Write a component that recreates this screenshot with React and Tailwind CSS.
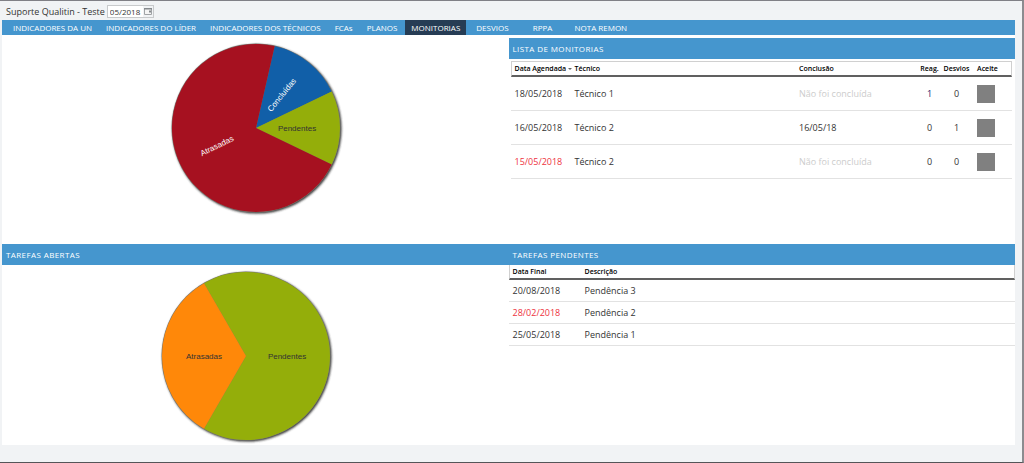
import { useState } from "react";

const tabs = [
  { label: "INDICADORES DA UN", size: "px-1.5" },
  { label: "INDICADORES DO LÍDER", size: "px-1.5" },
  { label: "INDICADORES DOS TÉCNICOS", size: "px-1.5" },
  { label: "FCAs", size: "px-1.5" },
  { label: "PLANOS", size: "px-1.5" },
  { label: "MONITORIAS", size: "px-1.5" },
  { label: "DESVIOS", size: "px-2" },
  { label: "RPPA", size: "min-w-12 px-2" },
  { label: "NOTA REMON", size: "px-1.5" },
];

const monitorias = [
  { data: "18/05/2018", tecnico: "Técnico 1", conclusao: null, reag: 1, desvios: 0, atrasada: false },
  { data: "16/05/2018", tecnico: "Técnico 2", conclusao: "16/05/18", reag: 0, desvios: 1, atrasada: false },
  { data: "15/05/2018", tecnico: "Técnico 2", conclusao: null, reag: 0, desvios: 0, atrasada: true },
];

const tarefas = [
  { data: "20/08/2018", descricao: "Pendência 3", atrasada: false },
  { data: "28/02/2018", descricao: "Pendência 2", atrasada: true },
  { data: "25/05/2018", descricao: "Pendência 1", atrasada: false },
];

const R = 84;

function point(deg) {
  const a = (deg * Math.PI) / 180;
  return `${(R * Math.sin(a)).toFixed(2)} ${(-R * Math.cos(a)).toFixed(2)}`;
}

function slicePath(from, to) {
  return `M0 0L${point(from)}A${R} ${R} 0 ${to - from > 180 ? 1 : 0} 1 ${point(to)}Z`;
}

function Pie({ title, id, slices }) {
  return (
    <svg width="176" height="176" viewBox="-87 -87 176 176" role="img" aria-label={title}>
      <defs>
        <filter id={id} x="-10%" y="-10%" width="120%" height="120%">
          <feGaussianBlur stdDeviation="0.8" />
        </filter>
      </defs>
      <circle cx="1" cy="1" r="84.5" fill="#333333" filter={`url(#${id})`} />
      <circle r="84.5" fill="#77776f" />
      {slices.map((s) => (
        <path key={s.label} d={slicePath(s.from, s.to)} fill={s.fill} />
      ))}
      {slices.map((s) => (
        <text
          key={s.label}
          transform={`translate(${s.x} ${s.y}) rotate(${s.rotate})`}
          textAnchor="middle"
          dominantBaseline="central"
          fill={s.ink}
          className="font-['Liberation_Sans',sans-serif] text-[8px]"
        >
          {s.label}
        </text>
      ))}
    </svg>
  );
}

function PanelTitle({ children }) {
  return (
    <h2 className="flex h-[21px] items-center bg-[#4596ce] px-1 text-[8px] font-normal tracking-wider text-white">
      {children}
    </h2>
  );
}

export default function App() {
  const [active, setActive] = useState("MONITORIAS");
  const [mes, setMes] = useState("05/2018");

  return (
    <div className="flex min-h-screen flex-col border-t border-r-2 border-b border-t-[#808086] border-r-[#8c8c90] border-b-[#555558] bg-[#f1f3f5] pr-[7px] pl-0.5 font-['Open_Sans',sans-serif] text-[9px] leading-3 text-[#333333]">
      <header className="flex h-[19px] items-center gap-0.5 pt-0.5 pl-1">
        <label htmlFor="mes">Suporte Qualitin - Teste</label>
        <div className="flex h-[13px] w-[47px] items-center justify-between border border-[#c8cacc] bg-white pl-0.5">
          <input
            id="mes"
            value={mes}
            onChange={(e) => setMes(e.target.value)}
            className="w-8 min-w-0 bg-transparent text-[8px] leading-[11px] outline-none"
          />
          <button type="button" aria-label="Abrir calendário" className="flex h-[11px] w-[10px] items-center justify-center bg-[#f1f3f5]">
            <svg width="8" height="7" viewBox="0 0 8 7">
              <path d="M.5.5h7v6h-7z" fill="#f5f5f5" stroke="#a0a3a6" />
              <path d="M0 0h8v1.500H0zM5 2.500h2v2H5z" fill="#85898d" />
            </svg>
          </button>
        </div>
      </header>

      <nav className="flex h-[15px] items-stretch gap-0.5 bg-[#4596ce] pl-[5px]">
        {tabs.map((t) => (
          <a
            key={t.label}
            href="#"
            aria-current={t.label === active ? "page" : undefined}
            onClick={(e) => {
              e.preventDefault();
              setActive(t.label);
            }}
            className={`flex items-center justify-center text-[8px] whitespace-nowrap text-white ${t.size} ${
              t.label === active ? "bg-[#263c54]" : ""
            }`}
          >
            {t.label}
          </a>
        ))}
      </nav>

      <main className="bg-white">
        <div className="grid grid-cols-2 pt-[3px]">
          <section className="flex h-[206px] justify-center pt-[3px] pl-[3px]">
            <Pie
              id="sombra-monitorias"
              title="Monitorias"
              slices={[
                { label: "Concluídas", from: 12.86, to: 64.29, fill: "#115fa8", ink: "#ffffff", x: 26, y: -33, rotate: -51 },
                { label: "Pendentes", from: 64.29, to: 115.71, fill: "#94ae0a", ink: "#333333", x: 41, y: 0, rotate: 0 },
                { label: "Atrasadas", from: 115.71, to: 372.86, fill: "#a61120", ink: "#ffffff", x: -39, y: 18, rotate: -26 },
              ]}
            />
          </section>
          <section>
            <PanelTitle>LISTA DE MONITORIAS</PanelTitle>
            <div className="pt-0.5 pr-[3px] pl-0.5">
              <table className="w-full table-fixed border-separate border-spacing-0 text-left">
                <colgroup>
                  <col className="w-[61px]" />
                  <col />
                  <col className="w-[120px]" />
                  <col className="w-[27px]" />
                  <col className="w-[27px]" />
                  <col className="w-[42px]" />
                </colgroup>
                <thead className="text-[7px] text-black">
                  <tr className="h-4 *:border-t *:border-b-2 *:border-t-[#d0d0d0] *:border-b-[#606060] *:p-0 *:font-semibold *:whitespace-nowrap">
                    <th className="border-l border-l-[#d0d0d0]">
                      <span className="flex items-center justify-between pl-[3px]">
                        Data Agendada
                        <svg width="4" height="2" viewBox="0 0 4 2">
                          <path d="M0 0h4L2 2z" fill="#666666" />
                        </svg>
                      </span>
                    </th>
                    <th><span className="pl-[3px]">Técnico</span></th>
                    <th><span className="pl-[3px]">Conclusão</span></th>
                    <th className="text-center">Reag.</th>
                    <th className="text-center">Desvios</th>
                    <th className="border-r border-r-[#d0d0d0]"><span className="pl-[7px]">Aceite</span></th>
                  </tr>
                </thead>
                <tbody>
                  {monitorias.map((m) => (
                    <tr key={m.data} className="h-[34px] *:border-b *:border-[#e2e2e2] *:py-0 *:whitespace-nowrap">
                      <td className={m.atrasada ? "pl-1 text-[#ee3340]" : "pl-1"}>{m.data}</td>
                      <td className="pl-[3px]">{m.tecnico}</td>
                      <td className={m.conclusao ? "pl-[3px]" : "pl-[3px] text-[#cccccc]"}>{m.conclusao ?? "Não foi concluída"}</td>
                      <td className={m.reag ? "text-center text-[#22226a]" : "text-center"}>{m.reag}</td>
                      <td className="text-center">{m.desvios}</td>
                      <td className="pl-[7px]">
                        <div className="size-[18px] bg-[#808080]" />
                      </td>
                    </tr>
                  ))}
                </tbody>
              </table>
            </div>
          </section>
        </div>

        <div className="grid grid-cols-2">
          <section className="h-[201px]">
            <PanelTitle>TAREFAS ABERTAS</PanelTitle>
            <div className="flex justify-center pt-1 pr-4">
              <Pie
                id="sombra-tarefas"
                title="Tarefas abertas"
                slices={[
                  { label: "Pendentes", from: -30, to: 210, fill: "#94ae0a", ink: "#333333", x: 41, y: 0, rotate: 0 },
                  { label: "Atrasadas", from: 210, to: 330, fill: "#ff8809", ink: "#333333", x: -42, y: 0, rotate: 0 },
                ]}
              />
            </div>
          </section>
          <section>
            <PanelTitle>TAREFAS PENDENTES</PanelTitle>
            <table className="w-full table-fixed border-separate border-spacing-0 text-left">
              <colgroup>
                <col className="w-[73px]" />
                <col />
              </colgroup>
              <thead className="text-[7px] text-black">
                <tr className="h-[15px] *:border-b-2 *:border-b-[#606060] *:p-0 *:font-semibold">
                  <th className="border-l border-l-[#d0d0d0]"><span className="pl-[3px]">Data Final</span></th>
                  <th className="border-r border-r-[#d0d0d0]"><span className="pl-[3px]">Descrição</span></th>
                </tr>
              </thead>
              <tbody>
                {tarefas.map((t) => (
                  <tr key={t.data} className="h-[22px] *:border-b *:border-[#e2e2e2] *:py-0">
                    <td className={t.atrasada ? "pl-1 text-[#ee3340]" : "pl-1"}>{t.data}</td>
                    <td className="pl-[3px]">{t.descricao}</td>
                  </tr>
                ))}
              </tbody>
            </table>
          </section>
        </div>
      </main>
    </div>
  );
}
